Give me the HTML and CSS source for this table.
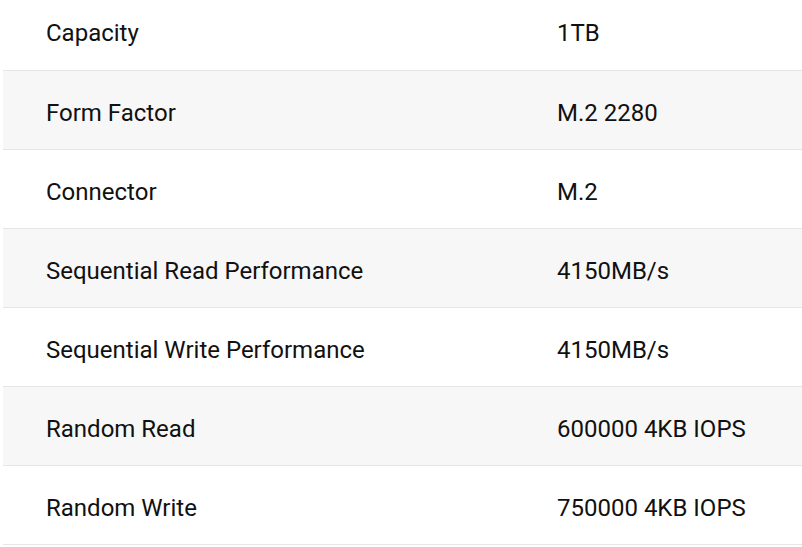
FILE: index.html
```html
<!DOCTYPE html>
<html>
<head>
<meta charset="utf-8">
<link rel="stylesheet" href="styles.css">
</head>
<body>
<table class="specs">
  <colgroup><col class="c-label"><col class="c-value"></colgroup>
  <tbody>
    <tr><td class="label">Capacity</td><td class="value">1TB</td></tr>
    <tr><td class="label">Form Factor</td><td class="value">M.2 2280</td></tr>
    <tr><td class="label">Connector</td><td class="value">M.2</td></tr>
    <tr><td class="label">Sequential Read Performance</td><td class="value">4150MB/s</td></tr>
    <tr><td class="label">Sequential Write Performance</td><td class="value">4150MB/s</td></tr>
    <tr><td class="label">Random Read</td><td class="value">600000 4KB IOPS</td></tr>
    <tr><td class="label">Random Write</td><td class="value">750000 4KB IOPS</td></tr>
  </tbody>
</table>
</body>
</html>
```
FILE: styles.css
```css
html, body {
  margin: 0;
  padding: 0;
  background: #ffffff;
}
.specs {
  margin: -9px 0 0 3px;
  width: 820px;
  table-layout: fixed;
  border-collapse: collapse;
  font-family: Roboto, "Liberation Sans", sans-serif;
  font-size: 24px;
  color: #111111;
}
.c-label {
  width: 511px;
}
.specs tr {
  border-bottom: 1px solid #e6e6e6;
}
.specs tr:nth-child(even) {
  background: #f7f7f7;
}
.specs td {
  height: 79px;
  padding: 6px 0 0 43px;
  box-sizing: border-box;
  vertical-align: middle;
  line-height: 28px;
  white-space: nowrap;
}
```
